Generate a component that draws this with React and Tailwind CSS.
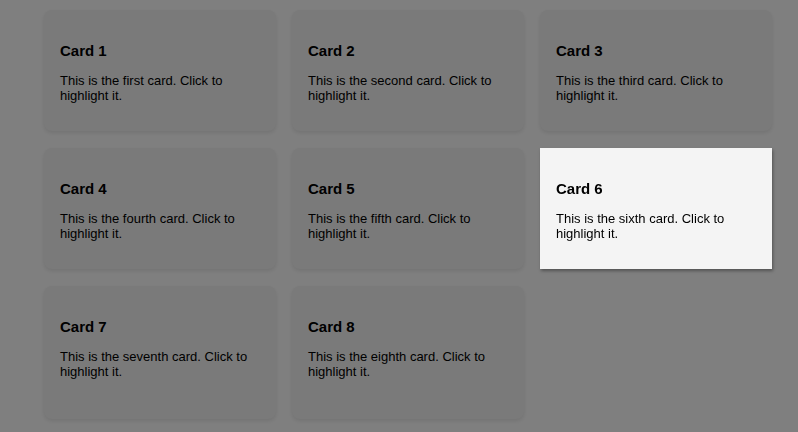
import React, { useState } from 'react';

const cards = [
  { id: 1, word: 'first' },
  { id: 2, word: 'second' },
  { id: 3, word: 'third' },
  { id: 4, word: 'fourth' },
  { id: 5, word: 'fifth' },
  { id: 6, word: 'sixth' },
  { id: 7, word: 'seventh' },
  { id: 8, word: 'eighth' },
];

const Card = ({ card, active, onClick }) => (
  <div
    onClick={onClick}
    className={
      active
        ? 'relative z-50 bg-[#f4f4f4] px-4 pt-[32px] pb-[29px] shadow-[1px_2px_3px_rgba(0,0,0,0.35)] cursor-pointer'
        : 'bg-[#f4f4f4] rounded-lg px-4 pt-[32px] pb-[29px] shadow-[0_2px_4px_rgba(0,0,0,0.1)] cursor-pointer'
    }
  >
    <h3 className="text-[15px] font-bold leading-[17px] text-black mb-[14px]">Card {card.id}</h3>
    <p className="text-[13px] leading-[15px] text-black">
      This is the {card.word} card. Click to highlight it.
    </p>
  </div>
);

export default function App() {
  const [active, setActive] = useState(6);

  return (
    <div className="min-h-screen bg-white font-['Liberation_Sans',Arial,sans-serif]">
      <div className="fixed inset-0 z-40 bg-black/50" onClick={() => setActive(null)} />
      <div className="ml-[44px] pt-[10px] w-[728px] grid grid-cols-3 gap-x-4 gap-y-[17px] grid-rows-[121px_121px_133px]">
        {cards.map((c) => (
          <Card key={c.id} card={c} active={active === c.id} onClick={() => setActive(c.id)} />
        ))}
      </div>
    </div>
  );
}
